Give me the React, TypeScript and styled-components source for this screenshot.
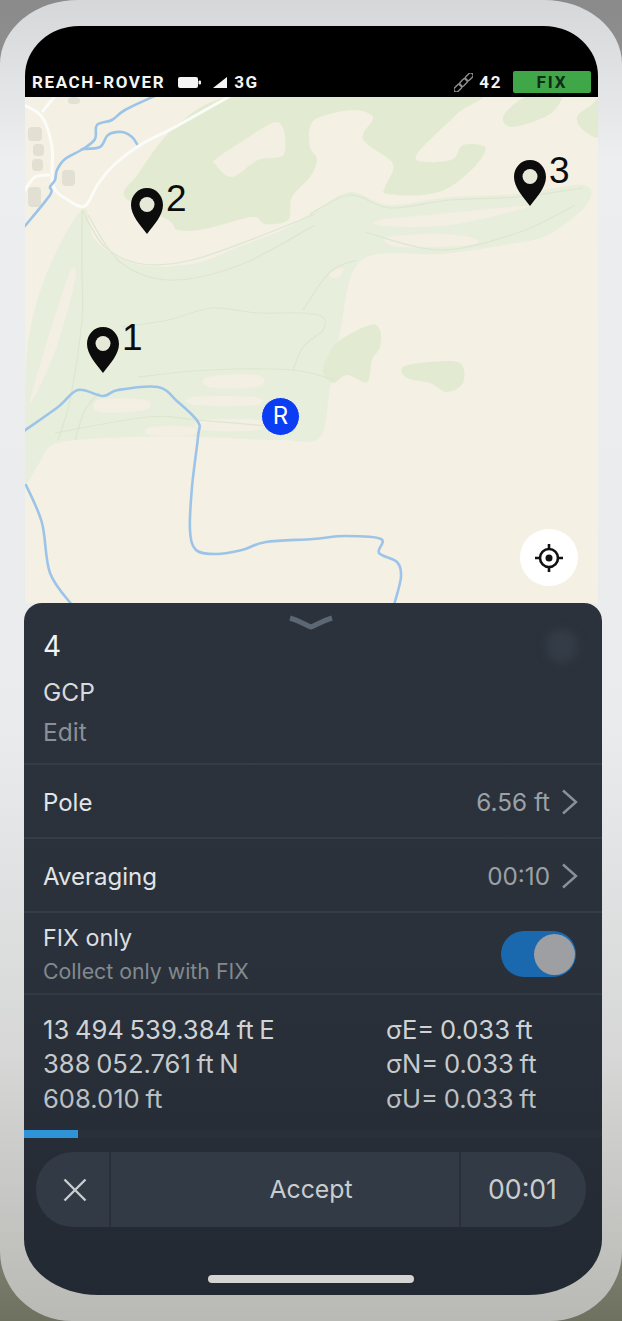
import React from "react";
import styled, { createGlobalStyle } from "styled-components";

const Global = createGlobalStyle`
  html, body { margin: 0; padding: 0; width: 622px; height: 1321px; overflow: hidden; background: #8c8c86; }
  * { box-sizing: border-box; }
`;

const Backdrop = styled.div`
  width: 622px;
  height: 1321px;
  background: linear-gradient(180deg, #8a8a8a 0%, #b8b8b8 40%, #a5a59c 80%, #6f7160 100%);
`;
const Device = styled.div`
  width: 622px;
  height: 1321px;
  padding: 26px 20px 26px 24px;
  border-radius: 78px 78px 72px 72px / 64px 64px 70px 70px;
  background: linear-gradient(180deg, #d6d7d8 0%, #eceef0 12%, #e9ebed 55%, #d6d7d6 80%, #b9b9b5 100%);
`;
const Screen = styled.main`
  display: flex;
  flex-direction: column;
  width: 578px;
  height: 1269px;
`;
const StatusBar = styled.header`
  display: flex;
  align-items: center;
  width: 573px;
  height: 71px;
  margin-left: 1px;
  padding: 45px 7px 4px 7px;
  border-radius: 54px 54px 0 0 / 50px 50px 0 0;
  background: #000;
  color: #f4f4f4;
  font: 700 17px/22px Roboto, "Liberation Sans", sans-serif;
  letter-spacing: 1.6px;
`;
const Carrier = styled.span`
  margin-right: 13px;
`;
const Net = styled.span`
  margin-left: 7px;
`;
const Spacer = styled.span`
  flex: 1;
`;
const Sats = styled.span`
  margin: 0 11px 0 6px;
`;
const FixBadge = styled.span`
  width: 78px;
  height: 22px;
  border-radius: 2px;
  background: #3fa748;
  color: #0f2c18;
  text-align: center;
  letter-spacing: 2px;
`;
const MapArea = styled.section`
  position: relative;
  width: 573px;
  height: 506px;
  margin-left: 1px;
  background: #f4f0e4;
  overflow: hidden;
`;
const MapDrawing = styled.svg`
  display: block;
  width: 573px;
  height: 506px;
  filter: blur(0.6px);
`;
const PinSpot = styled.div<{ $x: number; $y: number }>`
  position: absolute;
  left: ${(p) => p.$x}px;
  top: ${(p) => p.$y}px;
  display: flex;
  align-items: flex-start;
  color: #0c0c0c;
  font: 400 37px/36px "Liberation Sans", sans-serif;
`;
const PinLabel = styled.span`
  margin: -7px 0 0 3px;
`;
const RoverDot = styled.div`
  position: absolute;
  left: 236px;
  top: 300px;
  width: 39px;
  height: 39px;
  border-radius: 50%;
  border: 1px solid #f6f4ea;
  background: #0b3df2;
  color: #fff;
  font: 400 24px/36px Inter, sans-serif;
  text-align: center;
`;
const LocateButton = styled.button`
  position: absolute;
  left: 495px;
  top: 432px;
  width: 58px;
  height: 57px;
  padding: 0;
  border: 0;
  border-radius: 50%;
  background: #fff;
  display: flex;
  align-items: center;
  justify-content: center;
`;
const Sheet = styled.section`
  position: relative;
  flex: 1;
  display: flex;
  flex-direction: column;
  border-radius: 18px 18px 74px 74px / 18px 18px 56px 56px;
  background: linear-gradient(180deg, #2b323c 0%, #2a313b 50%, #262d36 78%, #222932 100%);
  font-family: Inter, "Liberation Sans", sans-serif;
  overflow: hidden;
`;
const Grabber = styled.svg`
  position: absolute;
  left: 264px;
  top: 12px;
`;
const GhostDot = styled.div`
  position: absolute;
  left: 522px;
  top: 26px;
  width: 32px;
  height: 34px;
  border-radius: 50%;
  background: #343c47;
  filter: blur(4px);
`;
const Header = styled.div`
  display: flex;
  flex-direction: column;
  height: 162px;
  padding: 25px 19px 0;
  border-bottom: 2px solid #343c47;
`;
const PointNo = styled.div`
  color: #f2f3f3;
  font-size: 28px;
  line-height: 36px;
`;
const PointType = styled.div`
  margin-top: 13px;
  color: #d8dadb;
  font-size: 24.5px;
  line-height: 30px;
`;
const EditLink = styled.div`
  margin-top: 10px;
  color: #8b9094;
  font-size: 24.5px;
  line-height: 30px;
`;
const Row = styled.div`
  display: flex;
  align-items: center;
  height: 74px;
  padding: 2px 24px 0 19px;
  border-bottom: 2px solid #343c47;
`;
const RowLabel = styled.span`
  flex: 1;
  color: #e2e4e5;
  font-size: 24px;
`;
const RowValue = styled.span`
  color: #9ba1a5;
  font-size: 24.3px;
  margin-right: 11px;
`;
const ToggleRow = styled.div`
  display: flex;
  align-items: center;
  justify-content: space-between;
  height: 82px;
  padding: 0 26px 0 19px;
  border-bottom: 2px solid #323a45;
`;
const ToggleLabel = styled.div`
  color: #dcdfe0;
  font-size: 23.3px;
  line-height: 30px;
`;
const ToggleHint = styled.div`
  margin-top: 5px;
  color: #83898e;
  font-size: 21.3px;
  line-height: 26px;
`;
const Switch = styled.div`
  display: flex;
  align-items: center;
  justify-content: flex-end;
  width: 75px;
  height: 46px;
  margin-top: 2px;
  padding-right: 1px;
  border-radius: 23px;
  background: #1a68ae;
`;
const Knob = styled.div`
  width: 41px;
  height: 41px;
  border-radius: 50%;
  background: #9d9fa3;
`;
const Readout = styled.div`
  display: grid;
  grid-template-columns: 343px 1fr;
  grid-auto-rows: 34.5px;
  align-items: center;
  height: 135px;
  padding: 17px 0 0 19px;
  font-size: 25.6px;
  word-spacing: -1.5px;
`;
const Reading = styled.span<{ $shade: string }>`
  color: ${(p) => p.$shade};
  white-space: nowrap;
`;
const ProgressTrack = styled.div`
  height: 8px;
  background: #29303a;
`;
const ProgressFill = styled.div`
  height: 8px;
  background: #2f93d8;
`;
const ActionBar = styled.div`
  display: flex;
  align-items: stretch;
  width: 550px;
  height: 75px;
  margin: 14px 0 0 12px;
  border-radius: 37px;
  background: #323a45;
  color: #c9cdcf;
  font-size: 24.8px;
`;
const CancelCell = styled.div`
  display: flex;
  align-items: center;
  justify-content: center;
  width: 75px;
  padding-left: 4px;
  border-right: 2px solid #29303a;
`;
const AcceptCell = styled.div`
  flex: 1;
  display: flex;
  align-items: center;
  justify-content: center;
  padding: 0 0 2px 52px;
`;
const TimerCell = styled.div`
  display: flex;
  align-items: center;
  justify-content: center;
  width: 127px;
  padding: 0 2px 2px 0;
  border-left: 2px solid #29303a;
  font-size: 26.6px;
`;
const HomeBar = styled.div`
  width: 206px;
  height: 8px;
  margin: 48px 0 0 184px;
  border-radius: 4px;
  background: #d4d4d2;
`;

type Pt = [number, number];

// Catmull-Rom curve through digitised map points.
const curve = (pts: Pt[], closed = false): string => {
  const n = pts.length;
  const at = (i: number): Pt => (closed ? pts[(i + n) % n] : pts[Math.max(0, Math.min(n - 1, i))]);
  let d = `M${pts[0][0]} ${pts[0][1]}`;
  const last = closed ? n : n - 1;
  for (let i = 0; i < last; i++) {
    const [p0, p1, p2, p3] = [at(i - 1), at(i), at(i + 1), at(i + 2)];
    const c1x = p1[0] + (p2[0] - p0[0]) / 6;
    const c1y = p1[1] + (p2[1] - p0[1]) / 6;
    const c2x = p2[0] - (p3[0] - p1[0]) / 6;
    const c2y = p2[1] - (p3[1] - p1[1]) / 6;
    d += ` C${c1x.toFixed(1)} ${c1y.toFixed(1)} ${c2x.toFixed(1)} ${c2y.toFixed(1)} ${p2[0]} ${p2[1]}`;
  }
  return closed ? d + "Z" : d;
};

const lightGreen: Pt[][] = [
  [[83, 209], [95, 240], [135, 264], [192, 264], [238, 247], [282, 230], [312, 213], [350, 192], [390, 205], [450, 197], [517, 194], [583, 185], [587, 204], [550, 234], [510, 244], [443, 254], [362, 260], [340, 333], [330, 387], [320, 437], [280, 440], [198, 437], [132, 437], [58, 443], [40, 462], [25, 483], [25, 430], [28, 343], [48, 270]],
];
const darkGreen: Pt[][] = [
  [[232, 96], [350, 94], [477, 94], [457, 114], [417, 154], [427, 162], [453, 159], [463, 145], [485, 147], [477, 164], [450, 187], [423, 195], [387, 194], [385, 187], [393, 170], [390, 160], [367, 144], [363, 134], [373, 117], [353, 110], [320, 117], [310, 127], [310, 147], [317, 160], [310, 177], [292, 197], [288, 220], [265, 224], [252, 217], [205, 229], [178, 230], [168, 220], [125, 197], [138, 174], [175, 127]],
  [[503, 117], [520, 100], [540, 94], [562, 94], [550, 114], [513, 127]],
  [[577, 117], [590, 106], [600, 100], [600, 136], [583, 130]],
  [[370, 325], [380, 330], [380, 347], [372, 360], [367, 382], [347, 375], [333, 383], [323, 373], [327, 357], [340, 340]],
  [[403, 367], [430, 362], [460, 363], [463, 383], [447, 392], [430, 383], [407, 378]],
];
const clearings: Pt[][] = [
  [[215, 160], [238, 144], [278, 122], [284, 154], [258, 160], [232, 177], [215, 164]],
  [[380, 220], [450, 213], [510, 207], [525, 208], [450, 225], [385, 226]],
  [[387, 237], [440, 234], [473, 238], [470, 245], [400, 247]],
  [[68, 277], [75, 280], [58, 343], [38, 390], [32, 393]],
  [[98, 400], [145, 400], [145, 410], [100, 412]],
  [[208, 377], [258, 375], [258, 387], [210, 387]],
  [[192, 397], [255, 397], [255, 405], [195, 405]],
  [[150, 427], [192, 427], [192, 435], [150, 435]],
  [[202, 420], [258, 420], [258, 430], [202, 430]],
  [[330, 272], [343, 268], [340, 276], [332, 278]],
];
const trails: Pt[][] = [
  [[82, 210], [105, 247], [142, 264], [192, 260], [258, 237], [315, 214]],
  [[88, 215], [120, 262], [170, 280], [240, 265], [315, 225]],
  [[82, 210], [82, 270], [82, 320], [70, 400], [58, 440]],
  [[122, 327], [168, 320], [212, 308], [258, 313], [302, 313], [323, 317], [323, 330], [303, 347], [293, 370]],
  [[138, 377], [208, 370], [292, 370], [335, 380]],
  [[55, 433], [148, 417], [198, 420], [290, 428]],
  [[100, 392], [85, 410], [75, 440]],
  [[303, 310], [323, 280], [337, 267], [357, 260]],
  [[310, 214], [350, 195], [390, 208], [450, 200], [517, 197], [583, 188]],
  [[365, 232], [440, 250], [520, 232], [575, 205]],
];
const roads: Pt[][] = [
  [[232, 95], [175, 127], [142, 144], [115, 164], [98, 184], [85, 206], [68, 200], [53, 185], [52, 147], [42, 117], [24, 105]],
  [[56, 95], [42, 112]],
  [[50, 175], [35, 177], [24, 191]],
];
const rivers: Pt[][] = [
  [[157, 95], [125, 110], [112, 120], [97, 125], [95, 139], [83, 149], [65, 159], [57, 170], [55, 180], [50, 187], [50, 195], [25, 226]],
  [[82, 149], [100, 147], [108, 135], [122, 132], [132, 137], [137, 144]],
  [[24, 431], [58, 407], [78, 390], [103, 396], [118, 390], [158, 387], [178, 402], [198, 422], [198, 437], [192, 487], [190, 530], [196, 550], [216, 554], [242, 550], [266, 542], [313, 539], [345, 536], [381, 539], [379, 553], [397, 562], [401, 577], [394, 605]],
  [[26, 485], [42, 523], [50, 573], [72, 605]],
];
const buildings = [
  { x: 28, y: 127, w: 14, h: 14 },
  { x: 33, y: 144, w: 11, h: 12 },
  { x: 32, y: 159, w: 11, h: 12 },
  { x: 62, y: 170, w: 13, h: 16 },
  { x: 28, y: 187, w: 13, h: 20 },
  { x: 68, y: 97, w: 12, h: 7 },
];

const MapArt = () => (
  <MapDrawing viewBox="25 97 573 506">
    <g fill="#e8eedc">
      {lightGreen.map((p, i) => <path key={i} d={curve(p, true)} />)}
    </g>
    <g fill="#e2ebd1">
      {darkGreen.map((p, i) => <path key={i} d={curve(p, true)} />)}
    </g>
    <g fill="#f3efe2">
      {clearings.map((p, i) => <path key={i} d={curve(p, true)} />)}
    </g>
    <g fill="none" stroke="#dde6cf" strokeWidth="1.2">
      {trails.map((p, i) => <path key={i} d={curve(p)} />)}
    </g>
    <g fill="#e2dfd3">
      {buildings.map((b, i) => <rect key={i} x={b.x} y={b.y} width={b.w} height={b.h} rx="4" />)}
    </g>
    <g fill="none" stroke="#fbfbf8" strokeWidth="3" strokeLinejoin="round">
      {roads.map((p, i) => <path key={i} d={curve(p)} />)}
    </g>
    <g fill="none" stroke="#9cc4e8" strokeWidth="2.6" strokeLinejoin="round" strokeLinecap="round">
      {rivers.map((p, i) => <path key={i} d={curve(p)} />)}
    </g>
  </MapDrawing>
);

const Pin = () => (
  <svg width="32" height="46" viewBox="0 0 32 46">
    <path fill="#0c0c0c" d="M16 0C7 0 0 7.500 0 17c0 10 9 20 16 29 7-9 16-19 16-29C32 7.500 25 0 16 0Z" />
    <circle cx="16" cy="16.500" r="7.500" fill="#e6e8d8" />
  </svg>
);

const pins = [
  { n: "1", x: 62, y: 230 },
  { n: "2", x: 106, y: 91 },
  { n: "3", x: 489, y: 63 },
];

const readings = [
  ["13 494 539.384 ft E", "σE= 0.033 ft", "#d0d3d5"],
  ["388 052.761 ft N", "σN= 0.033 ft", "#c6cacc"],
  ["608.010 ft", "σU= 0.033 ft", "#bcc0c2"],
];

const RowArrow = () => (
  <svg width="17" height="26" viewBox="0 0 17 26" fill="none" stroke="#8a9196" strokeWidth="2.400">
    <path d="M2 1.500 15 13 2 24.500" />
  </svg>
);

export default function App() {
  return (
    <Backdrop>
      <Global />
      <Device>
        <Screen>
          <StatusBar>
            <Carrier>REACH-ROVER</Carrier>
            <svg width="23" height="11" viewBox="0 0 23 11" fill="#f4f4f4">
              <rect width="20" height="11" rx="2" />
              <rect x="20.500" y="3.500" width="2.500" height="4" rx="1" />
            </svg>
            <svg width="14" height="11" viewBox="0 0 14 11" fill="#f4f4f4" style={{ marginLeft: 12 }}>
              <path d="M14 0V11H0Z" />
            </svg>
            <Net>3G</Net>
            <Spacer />
            <svg width="19" height="19" viewBox="0 0 19 19" fill="none" stroke="#8f8f8f" strokeWidth="1.400">
              <g transform="rotate(-45 9.500 9.500)">
                <rect x="-3" y="7" width="9" height="5" rx="2.500" />
                <rect x="5" y="7" width="9" height="5" rx="2.500" />
                <rect x="13" y="7" width="9" height="5" rx="2.500" />
              </g>
            </svg>
            <Sats>42</Sats>
            <FixBadge>FIX</FixBadge>
          </StatusBar>
          <MapArea>
            <MapArt />
            {pins.map((p) => (
              <PinSpot key={p.n} $x={p.x} $y={p.y}>
                <Pin />
                <PinLabel>{p.n}</PinLabel>
              </PinSpot>
            ))}
            <RoverDot>R</RoverDot>
            <LocateButton aria-label="Locate">
              <svg width="30" height="30" viewBox="0 0 30 30" fill="none" stroke="#111" strokeWidth="2.600">
                <circle cx="15" cy="15" r="9" />
                <circle cx="15" cy="15" r="3.500" fill="#111" stroke="none" />
                <path d="M15 1v5M15 24v5M1 15h5M24 15h5" />
              </svg>
            </LocateButton>
          </MapArea>
          <Sheet>
            <Grabber width="46" height="16" viewBox="0 0 46 16" fill="none" stroke="#5b6774" strokeWidth="5">
              <path d="M2 3 C12 6 18 10 23 12 C28 10 34 6 44 3" />
            </Grabber>
            <GhostDot />
            <Header>
              <PointNo>4</PointNo>
              <PointType>GCP</PointType>
              <EditLink>Edit</EditLink>
            </Header>
            <Row>
              <RowLabel>Pole</RowLabel>
              <RowValue>6.56 ft</RowValue>
              <RowArrow />
            </Row>
            <Row>
              <RowLabel>Averaging</RowLabel>
              <RowValue>00:10</RowValue>
              <RowArrow />
            </Row>
            <ToggleRow>
              <div>
                <ToggleLabel>FIX only</ToggleLabel>
                <ToggleHint>Collect only with FIX</ToggleHint>
              </div>
              <Switch>
                <Knob />
              </Switch>
            </ToggleRow>
            <Readout>
              {readings.map(([a, b, c]) => (
                <React.Fragment key={a}>
                  <Reading $shade={c}>{a}</Reading>
                  <Reading $shade={c}>{b}</Reading>
                </React.Fragment>
              ))}
            </Readout>
            <ProgressTrack>
              <ProgressFill style={{ width: `${(54 / 578) * 100}%` }} />
            </ProgressTrack>
            <ActionBar>
              <CancelCell>
                <svg width="24" height="24" viewBox="0 0 24 24" stroke="#c9cdcf" strokeWidth="2.400">
                  <path d="M1.500 1.500 22.500 22.500M22.500 1.500 1.500 22.500" />
                </svg>
              </CancelCell>
              <AcceptCell>Accept</AcceptCell>
              <TimerCell>00:01</TimerCell>
            </ActionBar>
            <HomeBar />
          </Sheet>
        </Screen>
      </Device>
    </Backdrop>
  );
}
